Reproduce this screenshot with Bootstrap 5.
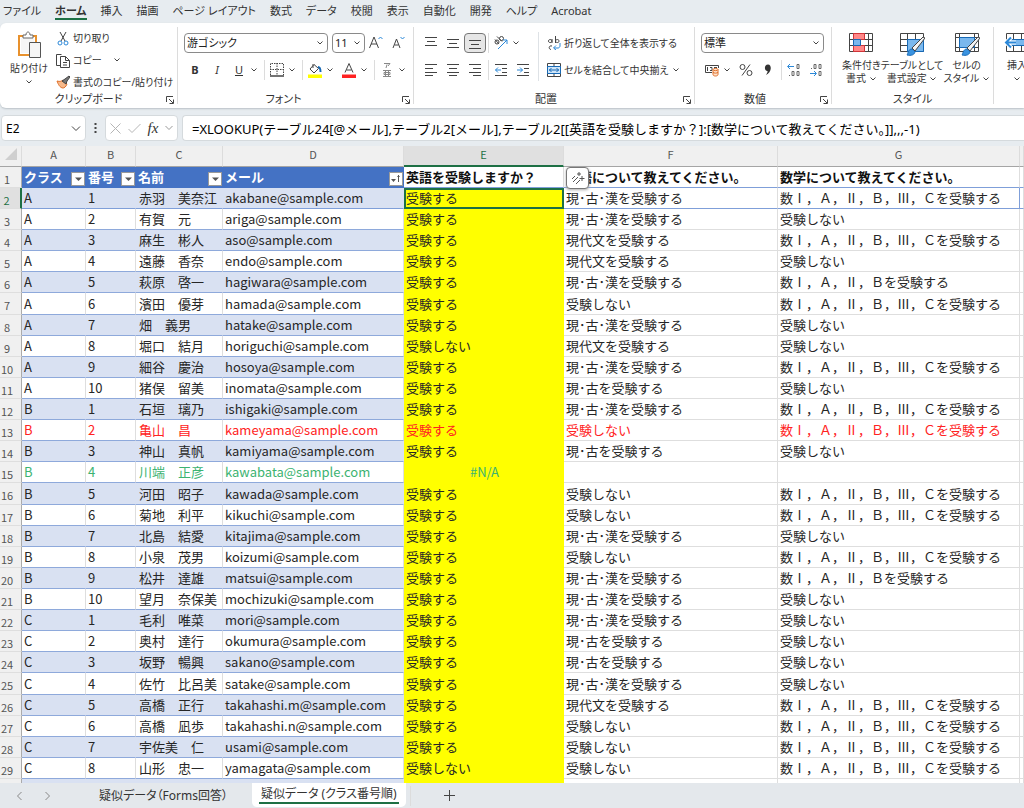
<!DOCTYPE html>
<html lang="ja">
<head>
<meta charset="utf-8">
<meta name="viewport" content="width=device-width, initial-scale=1">
<title>疑似データ</title>
<link href="https://cdn.jsdelivr.net/npm/bootstrap@5.3.0/dist/css/bootstrap.min.css" rel="stylesheet">
<style>
body{font-family:"Noto Sans","Noto Sans CJK JP",sans-serif;font-size:11px;line-height:16px;color:#333;background:#e7ecf0}
button{border:0;background:none;padding:0;color:inherit;font-feature-settings:inherit}
svg{display:block;flex:none;fill:none;stroke:#444;stroke-width:1}
.ui{font-feature-settings:"palt"}
.tabs{height:23px;gap:14px;padding:0 3px}
.tabs a{color:#333;text-decoration:none;line-height:16px;height:17px;white-space:nowrap}
.tabs a.on{font-weight:700;border-bottom:2px solid #1d7044}
.ribbon{background:#fff;height:85px;border-radius:6px 0 0 6px;box-shadow:0 1px 2px #b9c0c6;overflow:hidden}
.grp{flex:none;position:relative;padding:5px 6px 0;border-right:1px solid #dcdcdc;margin:4px 0 5px;height:77px}
.grp.w-clip{padding-top:0}
.grp-name{position:absolute;left:0;right:0;bottom:-3px;text-align:center}
.launch{position:absolute;right:3px;bottom:0}
.w-clip{width:178px}.w-font{width:236px}.w-align{width:281px}.w-num{width:137px}.w-style{width:162px}
.line{height:22px;display:flex;align-items:center}
.line+.line{margin-top:5px}
.tool{width:22px;height:20px;display:flex;align-items:center;justify-content:center;flex:none}
.tool.on{background:#e6e6e6;border:1px solid #777;border-radius:4px}
.chev{width:12px;height:20px;display:flex;align-items:center;flex:none}
.vr1{width:1px;height:20px;background:#dcdcdc;margin:0 1px 0 2px;flex:none}
.cmd{display:flex;align-items:center;gap:3px;height:22px;white-space:nowrap;font-size:10px}
.combo{appearance:none;height:20px;border:1px solid #8a8a8a;border-radius:4px;background:#fff;color:#222;padding:0 2px;font:inherit;line-height:16px;font-feature-settings:inherit}
.combo-wrap{position:relative;flex:none}
.combo-wrap svg{position:absolute;right:4px;top:7px;pointer-events:none}
.c-font{width:144px}.c-size{width:33px}.c-num{width:123px}
.big{display:flex;flex-direction:column;align-items:center;line-height:13px;white-space:nowrap;font-size:10px}
.big svg{margin-bottom:3px}
.big svg.inl{display:inline;margin:0}
.fbar{height:38px;padding:7px 0 5px 1px}
.box{background:#fff;border:1px solid #d5dadd;border-radius:4px;height:26px}
.box input{border:0;background:transparent;width:100%;height:24px;outline:0;padding:0;display:block}
.name{width:85px;font-size:12px}
.fxbox{width:73px;margin-left:8px;justify-content:space-around}
.fxb{font-family:"Liberation Serif",serif;font-size:15px}
.formula{margin-left:4px;padding-left:9px;font-size:13px;border-right:0;border-radius:4px 0 0 4px}
.sheet{min-height:0;overflow:hidden;background:#fff}
.gridt{table-layout:fixed;width:100%;border-collapse:separate;border-spacing:0;font-family:"Noto Sans CJK JP",sans-serif;font-size:13px;line-height:18px;color:#262626}
.gridt th,.gridt td{padding:0 0 0 2px;height:21px;overflow:hidden;white-space:nowrap;border-right:1px solid #dedede;border-bottom:1px solid #dedede;vertical-align:middle;font-weight:400}
.gridt tr.tall td,.gridt tr.tall th{height:22px}
.gridt thead th{background:#f0f0f0;text-align:center;font-size:11px;line-height:14px;color:#555;padding:0 0 4px;border-bottom-color:#a5a5a5;border-right-color:#dcdcdc}
.gridt thead th.sel{background:#e0e0e0;color:#1d7044;border-bottom:2px solid #1d7044}
.gridt .rn{background:#f0f0f0;text-align:center;font-size:11px;line-height:16px;color:#555;padding:3px 7px 0 0;border-right-color:#ababab}
.gridt .rn.sel{background:#e0e0e0;color:#1d7044;border-right:2px solid #1d7044}
.gridt .hd td{font-weight:700;color:#111}
.gridt .hd td.t{background:#4472c4;color:#fff;border-color:#4472c4}
.gridt .t{border-bottom-color:#8ea9db}
.gridt .band .t{background:#d9e1f2;border-right-color:#d9e1f2}
.gridt td.c{padding-left:3px}
.gridt td.y{background:#ff0;border-color:#ff0}
.gridt td.cur{outline:2px solid #1d7044;outline-offset:-2px;position:relative}
.gridt tr.first td,.gridt tr.hd td{border-bottom-color:#7f9fd9}
.gridt tr.first td.g{border-right-color:#7f9fd9}
.gridt .red td{color:#f22}
.gridt .green td{color:#3cb371}
.filt{width:14px;height:14px;background:#fff;border:1px solid #9a9a9a;display:flex;align-items:center;justify-content:center;margin-top:3px}
.filt svg{stroke:none;fill:#555}
.quick{position:absolute;left:566px;top:21px;width:23px;height:22px;background:#fff;border:1px solid #777;border-radius:4px;box-shadow:0 1px 3px #aaa;display:flex;align-items:center;justify-content:center}
.foot{height:25px;font-size:12px;background:#e4e8ec}
.foot a{color:#333;text-decoration:none;white-space:nowrap}
.foot .on{background:#fff;height:24px;padding:2px 7px;border-radius:0 0 5px 5px;margin-left:24px}
.foot .on span{display:block;border-bottom:2px solid #1d7044;height:19px;padding:0 2px;line-height:18px}
.next{margin-left:21px}
.s1{margin-left:48px}
.plus{margin-left:32px}
</style>
</head>
<body class="d-flex flex-column vh-100 overflow-hidden">
<svg width="0" height="0" class="position-absolute"><defs>
<symbol id="ch" viewBox="0 0 8 6"><path d="M1.5 1.5 4 4 6.5 1.5" stroke="#444"/></symbol>
<symbol id="la" viewBox="0 0 8 8"><path d="M.5 6V.5H7M3 3l4 4M7.500 3.500v4h-4"/></symbol>
</defs></svg>

<nav class="tabs ui d-flex align-items-center flex-shrink-0" aria-label="リボン">
<a href="#">ファイル</a><a href="#" class="on">ホーム</a><a href="#">挿入</a><a href="#">描画</a><a href="#">ページ レイアウト</a><a href="#">数式</a><a href="#">データ</a><a href="#">校閲</a><a href="#">表示</a><a href="#">自動化</a><a href="#">開発</a><a href="#">ヘルプ</a><a href="#">Acrobat</a>
</nav>

<div class="ribbon ui d-flex flex-shrink-0">
  <section class="grp w-clip">
    <div class="d-flex align-items-start">
      <button class="big ms-1 me-2 mt-1">
        <svg width="26" height="28" viewBox="0 0 26 28"><path d="M3 5h17v19H3z" fill="#fff" stroke="#e8912d" stroke-width="2"/><path d="M5 7h13v15H5z" fill="#f6f6f6" stroke="none"/><path d="M7 7V4h3c0-4 4-4 4 0h3v3z" fill="#fff" stroke="#666"/><path d="M13.500 11.500h11v15h-11z" fill="#f5f5f5" stroke="#555"/></svg>
        <span>貼り付け</span><svg width="8" height="6" class="mt-1"><use href="#ch"/></svg>
      </button>
      <div>
        <button class="cmd"><svg width="14" height="15" viewBox="0 0 14 15"><path d="M4 1l5 9M10 1 5 10"/><circle cx="4" cy="12" r="2" stroke="#2b88d8"/><circle cx="10" cy="12" r="2" stroke="#2b88d8"/></svg>切り取り</button>
        <button class="cmd"><svg width="14" height="15" viewBox="0 0 14 15"><path d="M4 12.500H.5V1.500h5M4.500 3.500h5l4 4v7h-9zM9.500 3.500v4h4M7 9.500h4M7 12h4"/></svg>コピー<svg width="8" height="6" class="ms-2"><use href="#ch"/></svg></button>
        <button class="cmd"><svg width="14" height="15" viewBox="0 0 14 15"><path d="M1 6c3 1 5 0 6-1l4 4c-1 3-3 4-4 4-3 0-5-4-6-7z" fill="#f7b98b" stroke="#e0702a"/><path d="M6 6l3-2 4-3 1 1-3 4-1 3z" fill="#777"/></svg>書式のコピー/貼り付け</button>
      </div>
    </div>
    <div class="grp-name">クリップボード</div><button class="launch" aria-label="クリップボードの詳細"><svg width="8" height="8"><use href="#la"/></svg></button>
  </section>

  <section class="grp w-font">
    <div class="line">
      <div class="combo-wrap"><select class="combo c-font" aria-label="フォント"><option>游ゴシック</option></select><svg width="8" height="6"><use href="#ch"/></svg></div>
      <div class="combo-wrap ms-1"><select class="combo c-size" aria-label="サイズ"><option>11</option></select><svg width="8" height="6"><use href="#ch"/></svg></div>
      <button class="tool" aria-label="拡大"><svg width="14" height="14" viewBox="0 0 14 14"><path d="M.5 12 5 1l4.500 11M2 8h6"/><path d="M9.500 3 11.500 1l2 2" stroke="#2b88d8"/></svg></button>
      <button class="tool" aria-label="縮小"><svg width="14" height="14" viewBox="0 0 14 14"><path d="M2 12 5.500 3 9 12M3.500 9h4"/><path d="M9.500 1 11.500 3l2-2" stroke="#2b88d8"/></svg></button>
    </div>
    <div class="line">
      <button class="tool fw-bold">B</button><button class="tool fst-italic">I</button><button class="tool text-decoration-underline">U</button><button class="chev" aria-label="下線"><svg width="8" height="6"><use href="#ch"/></svg></button><i class="vr1"></i>
      <button class="tool" aria-label="罫線"><svg width="14" height="14" viewBox="0 0 14 14"><path d="M.5 12V.5h13V12M7 0v12M0 6.500h14" stroke-dasharray="1.500 1"/><path d="M0 13h14" stroke-width="1.500"/></svg></button><button class="chev" aria-label="罫線の種類"><svg width="8" height="6"><use href="#ch"/></svg></button><i class="vr1"></i>
      <button class="tool" aria-label="塗りつぶし"><svg width="14" height="15" viewBox="0 0 14 15"><path d="M6 1.500 2 6l4 4 4.500-4.500zM5 1v4"/><path d="M10 4c2 0 2.500 2 2.500 5" stroke="#1769b5" stroke-width="2"/><path d="M0 11.500h14v3.500H0z" fill="#ff0" stroke="none"/></svg></button><button class="chev" aria-label="塗りつぶしの色"><svg width="8" height="6"><use href="#ch"/></svg></button>
      <button class="tool" aria-label="フォントの色"><svg width="14" height="15" viewBox="0 0 14 15"><path d="M3 9.500 7 .5l4 9M4.500 7h5"/><path d="M0 11.500h14v3.500H0z" fill="#f22" stroke="none"/></svg></button><button class="chev" aria-label="文字色"><svg width="8" height="6"><use href="#ch"/></svg></button><i class="vr1"></i>
      <button class="tool" aria-label="ふりがな"><svg width="10" height="16" viewBox="0 0 10 16"><path d="M2 1.500h6L6 4M5 2.500 4 6M1 8.500h8M3.500 8.500v6M6.500 8.500v6M2 10.500h6v2H2zM1 14.500h8" stroke="#888"/></svg></button><button class="chev" aria-label="ふりがなの設定"><svg width="8" height="6"><use href="#ch"/></svg></button>
    </div>
    <div class="grp-name pe-4">フォント</div><button class="launch" aria-label="フォントの詳細"><svg width="8" height="8"><use href="#la"/></svg></button>
  </section>

  <section class="grp w-align">
    <div class="d-flex">
      <div>
        <div class="line">
          <button class="tool" aria-label="上揃え"><svg width="12" height="12" viewBox="0 0 12 12"><path d="M0 .5h12M2 4.500h8M0 8.500h12"/></svg></button>
          <button class="tool" aria-label="上下中央"><svg width="12" height="12" viewBox="0 0 12 12"><path d="M0 2.500h12M2 6.500h8M0 10.500h12"/></svg></button>
          <button class="tool on" aria-label="下揃え"><svg width="12" height="12" viewBox="0 0 12 12"><path d="M0 3.500h12M2 7.500h8M0 11.500h12"/></svg></button><i class="vr1"></i>
          <button class="tool" aria-label="方向"><svg width="16" height="16" viewBox="0 0 16 16"><circle cx="4" cy="7" r="2"/><path d="M2 4.500l4 4.500M4 1.500l5 5"/><circle cx="8.500" cy="3.500" r="2"/><path d="M5 14 14 5M14 9V5h-4" stroke="#2b88d8"/></svg></button><button class="chev" aria-label="方向の設定"><svg width="8" height="6"><use href="#ch"/></svg></button>
        </div>
        <div class="line">
          <button class="tool" aria-label="左揃え"><svg width="12" height="12" viewBox="0 0 12 12"><path d="M0 .5h12M0 4.500h8M0 8.500h12M0 11.500h8"/></svg></button>
          <button class="tool" aria-label="中央揃え"><svg width="12" height="12" viewBox="0 0 12 12"><path d="M0 .5h12M2 4.500h8M0 8.500h12M2 11.500h8"/></svg></button>
          <button class="tool" aria-label="右揃え"><svg width="12" height="12" viewBox="0 0 12 12"><path d="M0 .5h12M4 4.500h8M0 8.500h12M4 11.500h8"/></svg></button><i class="vr1"></i>
          <button class="tool" aria-label="インデント減"><svg width="12" height="12" viewBox="0 0 12 12"><path d="M0 .5h12M7 4.500h5M7 8.500h5M0 11.500h12"/><path d="M6 6H.5M3 3.500.5 6 3 8.500" stroke="#2b88d8"/></svg></button>
          <button class="tool" aria-label="インデント増"><svg width="12" height="12" viewBox="0 0 12 12"><path d="M0 .5h12M7 4.500h5M7 8.500h5M0 11.500h12"/><path d="M0 6h5.500M3 3.500 5.500 6 3 8.500" stroke="#2b88d8"/></svg></button>
        </div>
      </div>
      <div class="border-start ms-1 ps-2 flex-grow-1">
        <div class="line"><button class="cmd"><svg width="14" height="14" viewBox="0 0 14 14"><path d="M5 3v4M5 5a1.800 1.500 0 1 0 0 .1M8.500 0v7M8.500 5a1.800 1.500 0 1 1 0 .1M5 10c-3-1-4 3-1 3.500"/><path d="M13 7v3c0 1-1 2-2 2H7M9 9.500 6.500 12 9 14" stroke="#2b88d8"/></svg>折り返して全体を表示する</button></div>
        <div class="line"><button class="cmd"><svg width="14" height="14" viewBox="0 0 14 14"><path d="M.5.5h13v13H.5zM7 0v3M7 11v3"/><path d="M.5 3.500h13v7H.5z" fill="#cfe5f8" stroke="#1769b5"/><path d="M2 7h10M4.500 5 2.500 7l2 2M9.500 5l2 2-2 2" stroke="#1769b5"/></svg>セルを結合して中央揃え</button><button class="chev ms-auto me-1" aria-label="結合の設定"><svg width="8" height="6"><use href="#ch"/></svg></button></div>
      </div>
    </div>
    <div class="grp-name pe-3">配置</div><button class="launch" aria-label="配置の詳細"><svg width="8" height="8"><use href="#la"/></svg></button>
  </section>

  <section class="grp w-num">
    <div class="line"><div class="combo-wrap"><select class="combo c-num" aria-label="表示形式"><option>標準</option></select><svg width="8" height="6"><use href="#ch"/></svg></div></div>
    <div class="line">
      <button class="tool" aria-label="通貨"><svg width="15" height="14" viewBox="0 0 15 14"><path d="M7 9.500H.5v-7h13V5M2.500 4v4M5 4.500h2v3H5M9 4.500h3"/><path d="M8 6.500v5c0 2 5 2 5 0v-5c0-1.500-5-1.500-5 0s5 1.500 5 0M8 9c0 1.500 5 1.500 5 0" fill="#fde3d0" stroke="#e0702a"/></svg></button><button class="chev" aria-label="通貨の設定"><svg width="8" height="6"><use href="#ch"/></svg></button>
      <button class="tool" aria-label="パーセント"><svg width="14" height="14" viewBox="0 0 14 14"><circle cx="3.500" cy="4" r="2.500"/><circle cx="10.500" cy="10" r="2.500"/><path d="M11 1.500 3 12.500"/></svg></button>
      <button class="tool" aria-label="桁区切り"><svg width="8" height="12" viewBox="0 0 8 12"><path d="M4 .5c4 0 4 8-2 10.500 2-3 1.500-4 1.500-4C0 7 0 .5 4 .5z" fill="#333" stroke="none"/></svg></button><i class="vr1"></i>
      <button class="tool" aria-label="小数点以下を増やす"><svg width="14" height="14" viewBox="0 0 14 14"><path d="M7 3.500H1M3 1 .5 3.500 3 6" stroke="#2b88d8"/><path d="M10 1.500h2v4h-2zM5 8.500h2v4H5zM10 8.500h2v4h-2zM2.500 12v1" stroke="#666"/></svg></button>
      <button class="tool" aria-label="小数点以下を減らす"><svg width="14" height="14" viewBox="0 0 14 14"><path d="M1 10.500h6M5 8l2.500 2.500L5 13" stroke="#2b88d8"/><path d="M5 1.500h2v4H5zM10 1.500h2v4h-2zM10 8.500h2v4h-2zM2.500 5v1" stroke="#666"/></svg></button>
    </div>
    <div class="grp-name pe-3">数値</div><button class="launch" aria-label="数値の詳細"><svg width="8" height="8"><use href="#la"/></svg></button>
  </section>

  <section class="grp w-style">
    <div class="d-flex justify-content-between ps-1 pe-1">
      <button class="big"><svg width="26" height="24" viewBox="0 0 26 24"><path d="M1.500 1.500h23v18h-23zM1 7.500h24M1 13.500h24M5.500 1v18M20.500 1v18"/><path d="M5.500 1.500h11v6h-11zM5.500 13.500h11v6h-11z" fill="#f88" stroke="#d13438"/><path d="M5.500 7.500h7v6h-7z" fill="#7ab8ee" stroke="#1769b5"/></svg><span>条件付き</span><span>書式 <svg class="inl" width="8" height="6"><use href="#ch"/></svg></span></button>
      <button class="big"><svg width="26" height="24" viewBox="0 0 26 24"><path d="M1.500 1.500h23v18h-23zM1 7.500h24M1 13.500h24M8.500 1v18M16.500 1v18"/><path d="M8.500 7.500h16v12h-16z" fill="#7ab8ee" stroke="#1769b5"/><path d="M8 23c1-1 1-6 5-6l3 2c0 4-4 5-8 4z" fill="#3a93e0" stroke="#1769b5"/><path d="M13 16 24 5l2 1-10 13z" fill="#f4f4f4"/></svg><span>テーブルとして</span><span>書式設定 <svg class="inl" width="8" height="6"><use href="#ch"/></svg></span></button>
      <button class="big"><svg width="26" height="24" viewBox="0 0 26 24"><path d="M1.500 1.500h23v18h-23zM1 5.500h24M1 15.500h24M5.500 1v18M20.500 1v18"/><path d="M5.500 5.500h15v10h-15z" fill="#7ab8ee" stroke="#1769b5"/><path d="M8 23c1-1 1-6 5-6l3 2c0 4-4 5-8 4z" fill="#3a93e0" stroke="#1769b5"/><path d="M13 16 24 5l2 1-10 13z" fill="#f4f4f4"/></svg><span>セルの</span><span>スタイル <svg class="inl" width="8" height="6"><use href="#ch"/></svg></span></button>
    </div>
    <div class="grp-name">スタイル</div>
  </section>
  <section class="grp border-0">
    <button class="big ms-1"><svg width="26" height="24" viewBox="0 0 26 24"><path d="M2.500 1.500h22v18h-22zM2 7.500h22M2 13.500h22M9.500 1v18M17.500 1v18"/><path d="M6 7.500h19v6H6z" fill="#7ab8ee" stroke="#1769b5"/><path d="M12 10.500H2M7 5.500l-5 5 5 5" stroke="#fff" stroke-width="4"/><path d="M12 10.500H2M7 5.500l-5 5 5 5" stroke="#2b88d8" stroke-width="2"/></svg><span>挿入</span><svg width="8" height="6" class="mt-1"><use href="#ch"/></svg></button>
  </section>
</div>

<div class="fbar d-flex align-items-center flex-shrink-0">
  <div class="box name d-flex align-items-center px-1 flex-shrink-0"><input value="E2" aria-label="名前ボックス"><svg width="10" height="7" viewBox="0 0 10 7"><path d="M1 1.500 5 5.500 9 1.500"/></svg></div>
  <svg class="ms-2" width="3" height="12" viewBox="0 0 3 12"><path d="M.5 1h2v2h-2zM.5 5h2v2h-2zM.5 9h2v2h-2z" fill="#444" stroke="none"/></svg>
  <div class="box fxbox d-flex align-items-center flex-shrink-0">
    <button aria-label="キャンセル"><svg width="11" height="11" viewBox="0 0 11 11"><path d="M.5.5l10 10M10.500.5l-10 10" stroke="#b5b5b5"/></svg></button>
    <button aria-label="入力"><svg width="13" height="11" viewBox="0 0 13 11"><path d="M.5 6 4 9.500 12.500 1" stroke="#b5b5b5"/></svg></button>
    <button aria-label="関数の挿入" class="fst-italic fxb">fx</button>
    <button aria-label="関数"><svg width="8" height="6" viewBox="0 0 8 6"><path d="M.5 1 4 4.500 7.500 1" stroke="#999"/></svg></button>
  </div>
  <div class="box formula flex-grow-1"><input aria-label="数式バー" value="=XLOOKUP(テーブル24[@メール],テーブル2[メール],テーブル2[[英語を受験しますか？]:[数学について教えてください。]],,,-1)"></div>
</div>

<main class="sheet flex-grow-1 position-relative">
<table class="gridt">
<colgroup><col style="width:22px"><col style="width:64px"><col style="width:50px"><col style="width:87px"><col style="width:181px"><col style="width:160px"><col style="width:214px"><col style="width:242px"><col></colgroup>
<thead><tr><th><svg class="ms-auto me-1" width="12" height="12" viewBox="0 0 12 12"><path d="M12 0v12H0z" fill="#cfcfcf" stroke="none"/></svg></th><th>A</th><th>B</th><th>C</th><th>D</th><th class="sel">E</th><th>F</th><th>G</th><th></th></tr></thead>
<tbody id="rows"></tbody>
</table>
<button class="quick" aria-label="クイック操作"><svg width="14" height="14" viewBox="0 0 14 14"><path d="M1 8l3-3M2 11l5-5M5 13l4-4M8 1v4M6 3h4M11 5v5M8.500 7.500h5" stroke="#555"/></svg></button>
</main>

<footer class="foot ui d-flex align-items-center flex-shrink-0">
  <button class="ms-3" aria-label="前のシート"><svg width="7" height="10" viewBox="0 0 7 10"><path d="M5.500 1 1.500 5l4 4" stroke="#888"/></svg></button>
  <button class="next" aria-label="次のシート"><svg width="7" height="10" viewBox="0 0 7 10"><path d="M1.500 1l4 4-4 4" stroke="#888"/></svg></button>
  <a href="#" class="s1">疑似データ（Forms回答）</a>
  <a href="#" class="on align-self-start"><span>疑似データ (クラス番号順)</span></a>
  <i class="vr1 ms-1"></i>
  <button class="plus" aria-label="新しいシート"><svg width="11" height="11" viewBox="0 0 11 11"><path d="M5.500 0v11M0 5.500h11"/></svg></button>
</footer>

<script>
const yes = '受験する', no = '受験しない';
const math = '数Ⅰ，Ａ，Ⅱ，Ｂ，Ⅲ，Ｃを受験する', math2 = '数Ⅰ，Ａ，Ⅱ，Ｂを受験する';
const all = '現･古･漢を受験する', modern = '現代文を受験する', two = '現･古を受験する';
const data = [
['A',1,'赤羽　美奈江','akabane',yes,all,math],
['A',2,'有賀　元','ariga',yes,all,no],
['A',3,'麻生　彬人','aso',yes,modern,math],
['A',4,'遠藤　香奈','endo',yes,modern,no],
['A',5,'萩原　啓一','hagiwara',yes,all,math2],
['A',6,'濱田　優芽','hamada',yes,no,math],
['A',7,'畑　義男','hatake',yes,all,no],
['A',8,'堀口　結月','horiguchi',no,modern,no],
['A',9,'細谷　慶治','hosoya',yes,all,math],
['A',10,'猪俣　留美','inomata',yes,two,no],
['B',1,'石垣　璃乃','ishigaki',yes,all,math],
['B',2,'亀山　昌','kameyama',yes,no,math,'red'],
['B',3,'神山　真帆','kamiyama',yes,two,no],
['B',4,'川端　正彦','kawabata','#N/A','','','green'],
['B',5,'河田　昭子','kawada',yes,no,math],
['B',6,'菊地　利平','kikuchi',yes,no,math],
['B',7,'北島　結愛','kitajima',yes,all,no],
['B',8,'小泉　茂男','koizumi',yes,no,math],
['B',9,'松井　達雄','matsui',yes,all,math2],
['B',10,'望月　奈保美','mochizuki',yes,all,no],
['C',1,'毛利　唯菜','mori',yes,all,no],
['C',2,'奥村　達行','okumura',yes,two,no],
['C',3,'坂野　暢興','sakano',yes,two,no],
['C',4,'佐竹　比呂美','satake',yes,all,no],
['C',5,'高橋　正行','takahashi.m',yes,modern,math],
['C',6,'高橋　凪歩','takahashi.n',yes,no,math],
['C',7,'宇佐美　仁','usami',yes,no,math],
['C',8,'山形　忠一','yamagata',no,no,math],
['','','','','','','']
];
const filter = (t, sort) => `<td class="t"><div class="d-flex justify-content-between align-items-center"><span>${t}</span><button class="filt" aria-label="${t}の絞り込み"><svg width="10" height="8" viewBox="0 0 10 8"><path d="${sort ? 'M0 4h5L2.500 7zM7 0h1v7H7zM6 2l1.500-2L9 2z' : 'M2 2.500h7L5.500 6z'}"/></svg></button></div></td>`;
let html = `<tr class="hd"><th class="rn">1</th>${filter('クラス')}${filter('番号')}${filter('名前')}${filter('メール', true)}<td>英語を受験しますか？</td><td>国語について教えてください。</td><td>数学について教えてください。</td><td></td></tr>`;
data.forEach((r, i) => {
  const cls = [i % 2 ? '' : 'band', i ? '' : 'first', i % 9 === 5 ? 'tall' : '', r[7] || ''].join(' ');
  const na = r[4] === '#N/A' ? ' text-center' : '';
  html += `<tr class="${cls}"><th class="rn${i ? '' : ' sel'}">${r[0] ? i + 2 : ''}</th><td class="t">${r[0]}</td><td class="t">${r[1]}</td><td class="t c">${r[2]}</td><td class="t">${r[3] ? r[3] + '@sample.com' : ''}</td><td class="y${i ? '' : ' cur'}${na}">${r[4]}</td><td>${r[5]}</td><td class="g">${r[6]}</td><td></td></tr>`;
});
document.getElementById('rows').innerHTML = html;
</script>
<script src="https://cdn.jsdelivr.net/npm/bootstrap@5.3.0/dist/js/bootstrap.bundle.min.js"></script>
</body>
</html>
